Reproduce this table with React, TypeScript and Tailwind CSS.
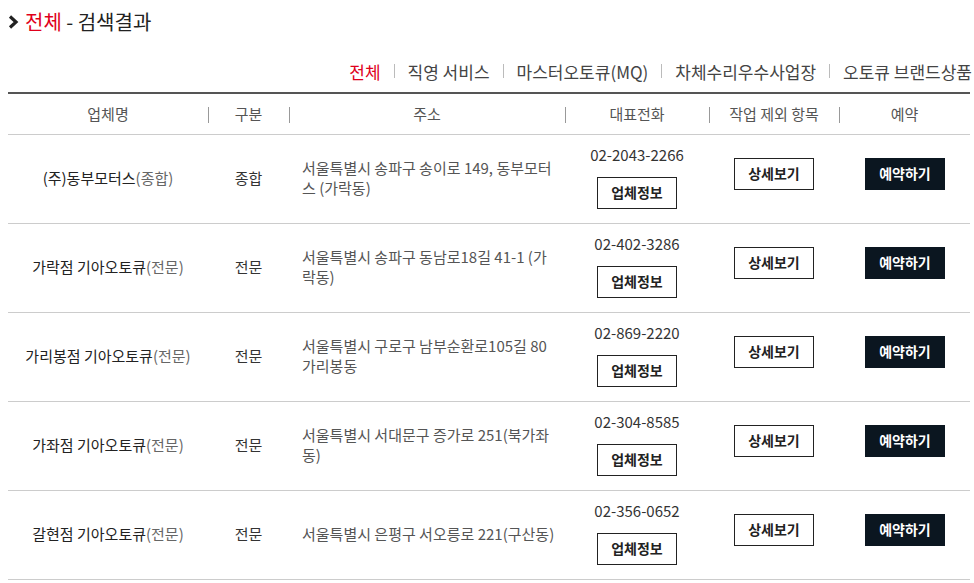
import React from "react";

const rows = [
  { name: "(주)동부모터스", kind: "(종합)", type: "종합", addr: "서울특별시 송파구 송이로 149, 동부모터스 (가락동)", phone: "02-2043-2266" },
  { name: "가락점 기아오토큐", kind: "(전문)", type: "전문", addr: "서울특별시 송파구 동남로18길 41-1 (가락동)", phone: "02-402-3286" },
  { name: "가리봉점 기아오토큐", kind: "(전문)", type: "전문", addr: "서울특별시 구로구 남부순환로105길 80 가리봉동", phone: "02-869-2220" },
  { name: "가좌점 기아오토큐", kind: "(전문)", type: "전문", addr: "서울특별시 서대문구 증가로 251(북가좌동)", phone: "02-304-8585" },
  { name: "갈현점 기아오토큐", kind: "(전문)", type: "전문", addr: "서울특별시 은평구 서오릉로 221(구산동)", phone: "02-356-0652" },
];

const tabs = ["전체", "직영 서비스", "마스터오토큐(MQ)", "차체수리우수사업장", "오토큐 브랜드상품"];
const heads = ["업체명", "구분", "주소", "대표전화", "작업 제외 항목", "예약"];
const cols = "grid grid-cols-[200px_81px_276px_144px_130px_131px]";

export default function App() {
  return (
    <div
      className="w-[974px] h-[583px] bg-white overflow-hidden"
      style={{ fontFamily: '"Noto Sans CJK KR", "Noto Sans", sans-serif' }}
    >
      <div className="h-[44px] flex items-center pl-[8px]">
        <svg width="11" height="14" viewBox="0 0 11 14" className="mr-[6px]">
          <polyline points="2,1.5 8,7 2,12.5" fill="none" stroke="#222" strokeWidth="3.2" />
        </svg>
        <span className="text-[20px] text-[#e0001b] leading-none">전체</span>
        <span className="text-[20px] text-[#222] leading-none">&nbsp;- 검색결과</span>
      </div>
      <div className="h-[48px] pt-[6px] flex items-center justify-end pr-[2px]">
        {tabs.map((t, i) => (
          <React.Fragment key={t}>
            {i > 0 && <span className="w-px h-[14px] bg-[#bbb] mx-[13px]" />}
            <span className={"text-[17px] leading-none " + (i === 0 ? "text-[#e0001b]" : "text-[#444]")}>{t}</span>
          </React.Fragment>
        ))}
      </div>
      <div className="ml-[8px] w-[962px] border-t-2 border-[#555]">
        <div className={cols + " h-[41px] border-b border-[#ccc]"}>
          {heads.map((h, i) => (
            <div key={h} className="relative flex items-center justify-center text-[15px] text-[#555]">
              {i > 0 && <span className="absolute left-0 top-[13px] w-px h-[16px] bg-[#999]" />}
              {h}
            </div>
          ))}
        </div>
        {rows.map((r) => (
          <div key={r.name} className={cols + " h-[89px] border-b border-[#ccc]"}>
            <div className="flex items-center justify-center text-[15px] text-[#222] pb-[2px]">
              {r.name}
              <span className="text-[#666]">{r.kind}</span>
            </div>
            <div className="flex items-center justify-center text-[15px] text-[#333] pb-[2px]">{r.type}</div>
            <div className="flex items-center pl-[13px] pr-[8px] text-[15px] leading-[20px] text-[#555] pb-[2px]">
              <span>{r.addr}</span>
            </div>
            <div className="flex flex-col items-center justify-center pb-[5px]">
              <span className="text-[15px] leading-[20px] text-[#333]">{r.phone}</span>
              <button className="mt-[12px] w-[80px] h-[32px] border border-[#222] bg-white text-[14px] font-bold text-[#222]">
                업체정보
              </button>
            </div>
            <div className="flex items-center justify-center pb-[11px]">
              <button className="w-[80px] h-[32px] border border-[#222] bg-white text-[14px] font-bold text-[#222]">
                상세보기
              </button>
            </div>
            <div className="flex items-center justify-center pl-[1px] pb-[11px]">
              <button className="w-[80px] h-[32px] bg-[#0b1620] text-[14px] font-bold text-white">
                예약하기
              </button>
            </div>
          </div>
        ))}
      </div>
    </div>
  );
}
